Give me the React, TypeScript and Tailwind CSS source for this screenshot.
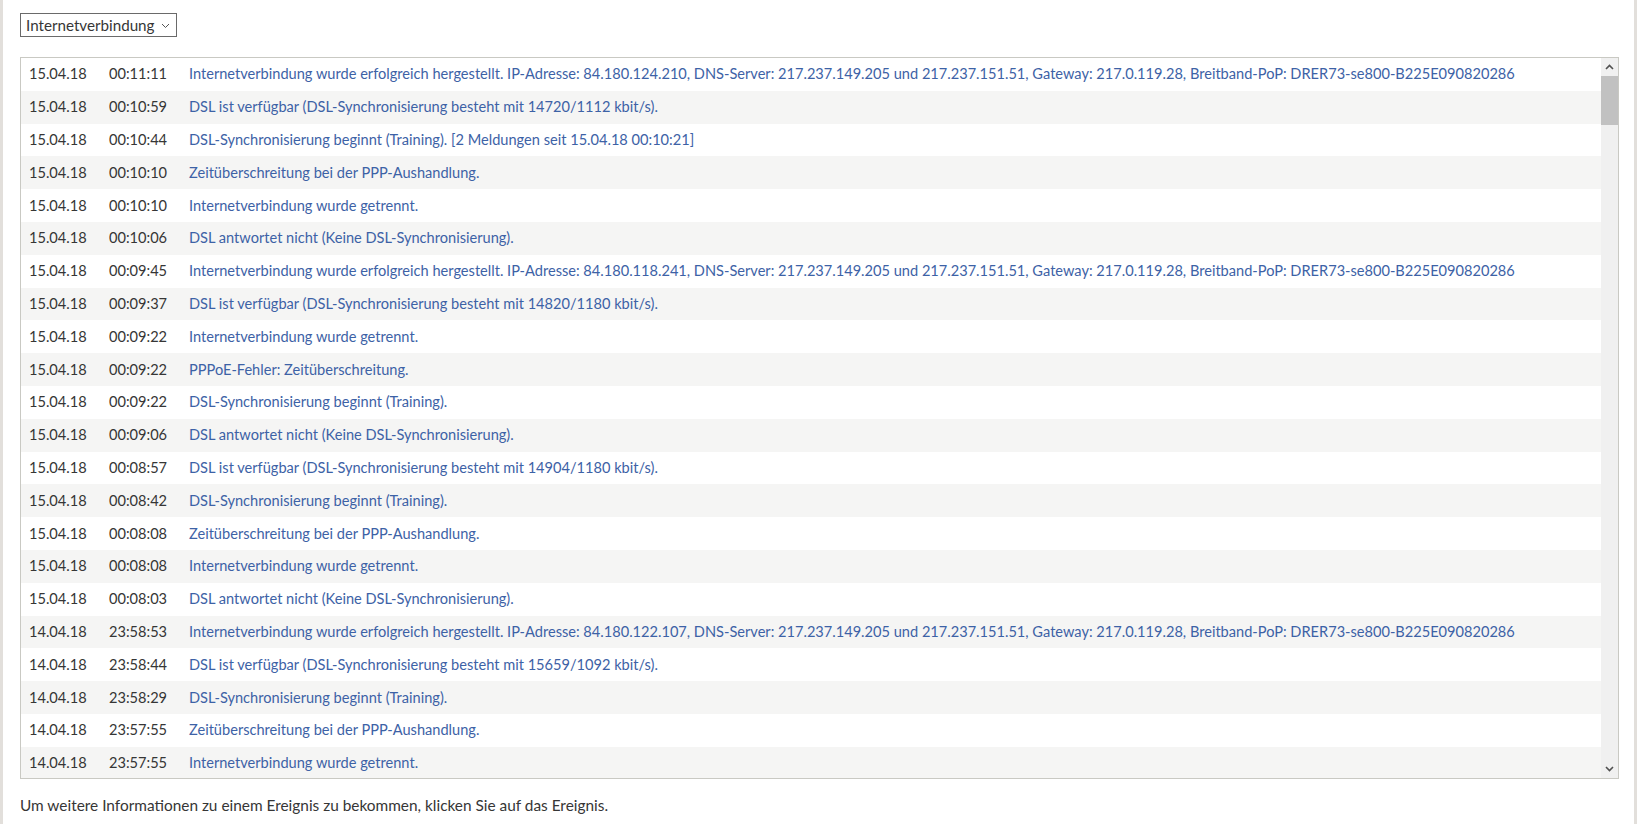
import React from "react";

const rows: [string, string, string][] = [
  ["15.04.18", "00:11:11", "Internetverbindung wurde erfolgreich hergestellt. IP-Adresse: 84.180.124.210, DNS-Server: 217.237.149.205 und 217.237.151.51, Gateway: 217.0.119.28, Breitband-PoP: DRER73-se800-B225E090820286"],
  ["15.04.18", "00:10:59", "DSL ist verfügbar (DSL-Synchronisierung besteht mit 14720/1112 kbit/s)."],
  ["15.04.18", "00:10:44", "DSL-Synchronisierung beginnt (Training). [2 Meldungen seit 15.04.18 00:10:21]"],
  ["15.04.18", "00:10:10", "Zeitüberschreitung bei der PPP-Aushandlung."],
  ["15.04.18", "00:10:10", "Internetverbindung wurde getrennt."],
  ["15.04.18", "00:10:06", "DSL antwortet nicht (Keine DSL-Synchronisierung)."],
  ["15.04.18", "00:09:45", "Internetverbindung wurde erfolgreich hergestellt. IP-Adresse: 84.180.118.241, DNS-Server: 217.237.149.205 und 217.237.151.51, Gateway: 217.0.119.28, Breitband-PoP: DRER73-se800-B225E090820286"],
  ["15.04.18", "00:09:37", "DSL ist verfügbar (DSL-Synchronisierung besteht mit 14820/1180 kbit/s)."],
  ["15.04.18", "00:09:22", "Internetverbindung wurde getrennt."],
  ["15.04.18", "00:09:22", "PPPoE-Fehler: Zeitüberschreitung."],
  ["15.04.18", "00:09:22", "DSL-Synchronisierung beginnt (Training)."],
  ["15.04.18", "00:09:06", "DSL antwortet nicht (Keine DSL-Synchronisierung)."],
  ["15.04.18", "00:08:57", "DSL ist verfügbar (DSL-Synchronisierung besteht mit 14904/1180 kbit/s)."],
  ["15.04.18", "00:08:42", "DSL-Synchronisierung beginnt (Training)."],
  ["15.04.18", "00:08:08", "Zeitüberschreitung bei der PPP-Aushandlung."],
  ["15.04.18", "00:08:08", "Internetverbindung wurde getrennt."],
  ["15.04.18", "00:08:03", "DSL antwortet nicht (Keine DSL-Synchronisierung)."],
  ["14.04.18", "23:58:53", "Internetverbindung wurde erfolgreich hergestellt. IP-Adresse: 84.180.122.107, DNS-Server: 217.237.149.205 und 217.237.151.51, Gateway: 217.0.119.28, Breitband-PoP: DRER73-se800-B225E090820286"],
  ["14.04.18", "23:58:44", "DSL ist verfügbar (DSL-Synchronisierung besteht mit 15659/1092 kbit/s)."],
  ["14.04.18", "23:58:29", "DSL-Synchronisierung beginnt (Training)."],
  ["14.04.18", "23:57:55", "Zeitüberschreitung bei der PPP-Aushandlung."],
  ["14.04.18", "23:57:55", "Internetverbindung wurde getrennt."],
];

export default function App() {
  return (
    <div className="h-[824px] bg-white border-l-[3px] border-r-[3px] border-[#e2dfdb] pl-[17px] pr-[15px] pt-[13px] font-['Lato',sans-serif] text-[15px] text-[#363636] overflow-hidden">
      {/* Filter */}
      <div className="flex">
        <div className="h-[24px] w-[157px] border border-[#6a6a6a] flex items-center pl-[5px] gap-[7px] text-[15.2px]">
          <span>Internetverbindung</span>
          <svg width="9" height="6" viewBox="0 0 9 6" className="mt-[1px]">
            <path d="M1 1 L4.5 4.5 L8 1" fill="none" stroke="#555" strokeWidth="1" />
          </svg>
        </div>
      </div>

      {/* Event list */}
      <div className="mt-[20px] h-[722px] border border-[#c9c9c3] flex">
        <div className="flex-1 overflow-hidden text-[14.6px]">
          {rows.map(([date, time, msg], i) => (
            <div
              key={i}
              className={`h-[32.8px] flex items-center pl-[8px] whitespace-nowrap ${
                i % 2 === 1 ? "bg-[#f5f5f4]" : "bg-white"
              }`}
            >
              <span className="w-[80px] shrink-0">{date}</span>
              <span className="w-[80px] shrink-0">{time}</span>
              <span className="text-[#3d62a6]">{msg}</span>
            </div>
          ))}
        </div>
        {/* Scrollbar */}
        <div className="w-[17px] bg-[#f0f0f0] flex flex-col">
          <div className="h-[18px] flex items-center justify-center">
            <svg width="9" height="6" viewBox="0 0 9 6">
              <path d="M1 5 L4.5 1.5 L8 5" fill="none" stroke="#505050" strokeWidth="1.6" />
            </svg>
          </div>
          <div className="h-[49px] bg-[#c1c1c1]" />
          <div className="flex-1" />
          <div className="h-[18px] flex items-center justify-center">
            <svg width="9" height="6" viewBox="0 0 9 6">
              <path d="M1 1 L4.5 4.5 L8 1" fill="none" stroke="#505050" strokeWidth="1.6" />
            </svg>
          </div>
        </div>
      </div>

      <p className="mt-[15px] text-[15.4px]">
        Um weitere Informationen zu einem Ereignis zu bekommen, klicken Sie auf das Ereignis.
      </p>
    </div>
  );
}
